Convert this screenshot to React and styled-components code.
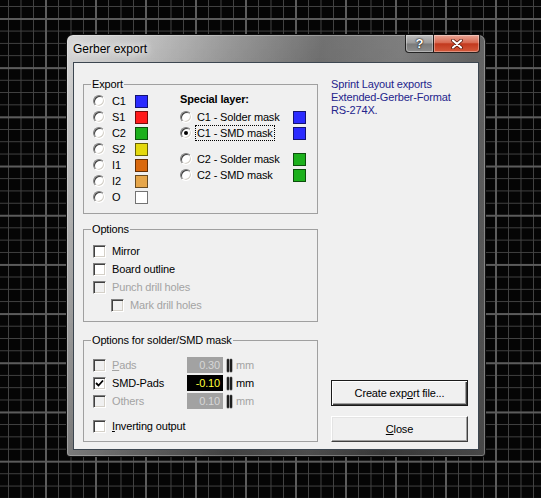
import React from 'react';
import styled, { createGlobalStyle, css } from 'styled-components';

const GlobalStyle = createGlobalStyle`
  html, body { margin: 0; padding: 0; }
  body {
    width: 541px;
    height: 498px;
    overflow: hidden;
    font-family: "Liberation Sans", Arial, sans-serif;
    background-color: #050505;
    background-image:
      linear-gradient(to right, #5c5c5c 2px, transparent 2px),
      linear-gradient(to bottom, #5c5c5c 2px, transparent 2px),
      linear-gradient(to right, #434343 1px, transparent 1px),
      linear-gradient(to bottom, #434343 1px, transparent 1px);
    background-size: 50px 100%, 100% 49.2px, 12.5px 100%, 100% 12.3px;
    background-position: 45px 0, 0 18px, 8px 0, 0 6px;
  }
`;

const Page = styled.div`
  box-sizing: border-box;
  width: 541px;
  height: 498px;
  padding: 34px 0 0 66px;
`;

const Window = styled.div`
  box-sizing: border-box;
  width: 420px;
  height: 423px;
  display: flex;
  flex-direction: column;
  padding: 0 6px 6px;
  border: 1px solid rgba(10, 10, 10, 0.95);
  border-radius: 7px 7px 4px 4px;
  box-shadow: inset 0 0 0 1px rgba(255, 255, 255, 0.28);
  background:
    linear-gradient(to bottom, rgba(255, 255, 255, 0.12), rgba(0, 0, 0, 0.3)),
    linear-gradient(103deg, #d2d2d2 0%, #bdbdbd 14%, #8a8a8a 32%, #5e5e5e 50%, #6e6e6e 66%, #4f4f4f 80%, #666 100%);
`;

const TitleBar = styled.div`
  height: 27px;
  display: flex;
  justify-content: space-between;
  align-items: flex-start;
`;

const Title = styled.span`
  align-self: center;
  font-size: 12px;
  line-height: 14px;
  color: #000;
  text-shadow: 0 0 6px #fff, 0 0 10px rgba(255, 255, 255, 0.9);
`;

const CaptionButtons = styled.div`
  display: flex;
  margin-right: -1px;
`;

const CaptionButton = styled.div`
  box-sizing: border-box;
  height: 18px;
  display: flex;
  align-items: center;
  justify-content: center;
  border: 1px solid rgba(20, 20, 20, 0.9);
  border-top: none;
  box-shadow: inset 0 0 0 1px rgba(255, 255, 255, 0.35);
`;

const HelpButton = styled(CaptionButton)`
  width: 28px;
  border-right: none;
  border-radius: 0 0 0 4px;
  background: linear-gradient(to bottom, #bdbdbd 0%, #9a9a9a 48%, #7a7a7a 52%, #8e8e8e 100%);
  color: #fff;
  font-weight: bold;
  font-size: 13px;
  text-shadow: 0 0 2px #000, 0 0 1px #000;
`;

const CloseButton = styled(CaptionButton)`
  width: 47px;
  border-radius: 0 0 4px 0;
  background: linear-gradient(to bottom, #e9a696 0%, #d86a52 45%, #c2391e 52%, #d45a3c 100%);
`;

const Client = styled.div`
  flex: 1;
  display: flex;
  gap: 13px;
  padding: 15px 10px 7px 9px;
  background: #f0f0f0;
  border: 1px solid #3c4650;
  font-size: 11px;
  line-height: 13px;
  letter-spacing: -0.15px;
  color: #000;
`;

const LeftColumn = styled.div`
  width: 235px;
  display: flex;
  flex-direction: column;
`;

const Group = styled.fieldset`
  margin: ${p => p.$gap || 0}px 0 0;
  padding: ${p => p.$pad};
  border: 1px solid #a0a0a0;
  min-width: 0;
`;

const Legend = styled.legend`
  padding: 0 1px;
  margin-left: -2px;
  font-size: 11px;
  line-height: 13px;
`;

const ExportBody = styled.div`
  display: flex;
  gap: 32px;
`;

const Stack = styled.div`
  display: flex;
  flex-direction: column;
`;

const Row = styled.div`
  display: flex;
  align-items: center;
  height: ${p => p.$h || 16}px;
  margin-top: ${p => p.$top || 0}px;
  padding-left: ${p => p.$indent || 0}px;
`;

const RadioMark = styled.span`
  box-sizing: border-box;
  flex: none;
  width: 12px;
  height: 12px;
  border-radius: 50%;
  border: 1px solid;
  border-color: #808080 #fff #fff #808080;
  box-shadow: inset 1px 1px 0 #404040, inset -1px -1px 0 #d4d0c8;
  background: #fff;
  display: flex;
  align-items: center;
  justify-content: center;
  margin-right: ${p => p.$gap}px;

  ${p => p.$on && css`
    &::after {
      content: '';
      width: 4px;
      height: 4px;
      border-radius: 50%;
      background: #000;
    }
  `}
`;

const LayerName = styled.span`
  width: ${p => p.$w}px;
  flex: none;
  white-space: nowrap;
`;

const FocusName = styled.span`
  box-sizing: border-box;
  height: 14px;
  padding: 0 1px;
  display: inline-flex;
  align-items: center;
  white-space: nowrap;
  outline: ${p => (p.$focus ? '1px dotted #000' : 'none')};
`;

const Swatch = styled.span`
  box-sizing: border-box;
  flex: none;
  width: 13px;
  height: 13px;
  border: 1px solid rgba(0, 0, 0, 0.55);
  background: ${p => p.$color};
`;

const Heading = styled.div`
  font-weight: bold;
  height: 12px;
  line-height: 12px;
  margin-bottom: 4px;
`;

const CheckBox = styled.span`
  box-sizing: border-box;
  flex: none;
  width: 13px;
  height: 13px;
  margin-right: 6px;
  border: 1px solid;
  border-color: #808080 #fff #fff #808080;
  box-shadow: inset 1px 1px 0 #404040, inset -1px -1px 0 #d4d0c8;
  background: ${p => (p.$disabled ? '#f0f0f0' : '#fff')};
  display: flex;
  align-items: center;
  justify-content: center;
`;

const Label = styled.span`
  white-space: nowrap;
  color: ${p => (p.$disabled ? '#a3a3a3' : '#000')};
  ${p => p.$w && css`width: ${p.$w}px; flex: none;`}
`;

const ValueBox = styled.span`
  box-sizing: border-box;
  width: 36px;
  height: 16px;
  padding-right: 3px;
  display: flex;
  align-items: center;
  justify-content: flex-end;
  background: ${p => (p.$active ? '#000' : '#a2a2a2')};
  color: ${p => (p.$active ? '#ffff3c' : '#d6d6d6')};
`;

const Spinner = styled.span`
  display: flex;
  gap: 1px;
  margin: 0 4px;
  height: 13px;

  &::before, &::after {
    content: '';
    width: 2px;
    height: 13px;
    border-radius: 1px;
    background: #1e1e1e;
    box-shadow: 0 0 0 0.5px #777;
  }
`;

const RightColumn = styled.div`
  width: 137px;
  display: flex;
  flex-direction: column;
  justify-content: space-between;
`;

const Info = styled.p`
  margin: 0;
  color: #24248c;
  line-height: 13px;
`;

const ButtonStack = styled.div`
  display: flex;
  flex-direction: column;
  gap: 10px;
`;

const PushButton = styled.button`
  box-sizing: border-box;
  width: 137px;
  height: 26px;
  padding: 0;
  font: 11px "Liberation Sans", Arial, sans-serif;
  letter-spacing: -0.15px;
  color: #000;
  background: #f0f0f0;
  border: 1px solid;
  border-color: #fff #404040 #404040 #fff;
  box-shadow: inset -1px -1px 0 #a0a0a0, inset 1px 1px 0 #e4e4e4;

  ${p => p.$default && css`
    border-color: #1a1a1a;
    box-shadow: inset 1px 1px 0 #fff, inset -1px -1px 0 #404040, inset -2px -2px 0 #a0a0a0;
  `}
`;

const exportLayers = [
  { name: 'C1', color: '#2b2bff' },
  { name: 'S1', color: '#ff1a1a' },
  { name: 'C2', color: '#1cb01c' },
  { name: 'S2', color: '#e4d90e' },
  { name: 'I1', color: '#d9690e' },
  { name: 'I2', color: '#e6a64a' },
  { name: 'O', color: '#ffffff' },
];

const CloseGlyph = () => (
  <svg width="12" height="10" viewBox="0 0 12 10">
    <path d="M2 1.5 L10 8.5 M10 1.5 L2 8.5" stroke="#4a0e00" strokeWidth="3.6" strokeLinecap="round" />
    <path d="M2 1.5 L10 8.5 M10 1.5 L2 8.5" stroke="#fff" strokeWidth="2.2" strokeLinecap="round" />
  </svg>
);

const CheckGlyph = () => (
  <svg width="9" height="9" viewBox="0 0 9 9">
    <path d="M1 4 L3.5 6.5 L8 1.5" fill="none" stroke="#000" strokeWidth="1.8" />
  </svg>
);

const Special = ({ label, color, on, focus, top }) => (
  <Row $top={top}>
    <RadioMark $gap={4} $on={on} />
    <LayerName $w={97}>
      <FocusName $focus={focus}>{label}</FocusName>
    </LayerName>
    <Swatch $color={color} />
  </Row>
);

const Option = ({ children, disabled, checked, indent }) => (
  <Row $h={18} $indent={indent}>
    <CheckBox $disabled={disabled}>{checked && <CheckGlyph />}</CheckBox>
    <Label $disabled={disabled}>{children}</Label>
  </Row>
);

const MaskOption = ({ label, value, disabled, checked }) => (
  <Row $h={18}>
    <CheckBox $disabled={disabled}>{checked && <CheckGlyph />}</CheckBox>
    <Label $w={75} $disabled={disabled}>{label}</Label>
    <ValueBox $active={!disabled}>{value}</ValueBox>
    <Spinner />
    <Label $disabled={disabled}>mm</Label>
  </Row>
);

export default function App() {
  return (
    <Page>
      <GlobalStyle />
      <Window>
        <TitleBar>
          <Title>Gerber export</Title>
          <CaptionButtons>
            <HelpButton>?</HelpButton>
            <CloseButton>
              <CloseGlyph />
            </CloseButton>
          </CaptionButtons>
        </TitleBar>
        <Client>
          <LeftColumn>
            <Group $pad="2px 0 8px 9px">
              <Legend>Export</Legend>
              <ExportBody>
                <Stack>
                  {exportLayers.map(l => (
                    <Row key={l.name}>
                      <RadioMark $gap={7} />
                      <LayerName $w={23}>{l.name}</LayerName>
                      <Swatch $color={l.color} />
                    </Row>
                  ))}
                </Stack>
                <Stack>
                  <Heading>Special layer:</Heading>
                  <Special label="C1 - Solder mask" color="#2b2bff" />
                  <Special label="C1 - SMD mask" color="#2b2bff" on focus />
                  <Special label="C2 - Solder mask" color="#1cb01c" top={10} />
                  <Special label="C2 - SMD mask" color="#1cb01c" />
                </Stack>
              </ExportBody>
            </Group>

            <Group $gap={9} $pad="6px 0 7px 9px">
              <Legend>Options</Legend>
              <Option>Mirror</Option>
              <Option>Board outline</Option>
              <Option disabled>Punch drill holes</Option>
              <Option disabled indent={18}>Mark drill holes</Option>
            </Group>

            <Group $gap={12} $pad="9px 0 6px 9px">
              <Legend>Options for solder/SMD mask</Legend>
              <MaskOption label={<><u>P</u>ads</>} value="0.30" disabled />
              <MaskOption label="SMD-Pads" value="-0.10" checked />
              <MaskOption label="Others" value="0.10" disabled />
              <Row $h={18} $top={7}>
                <CheckBox />
                <Label><u>I</u>nverting output</Label>
              </Row>
            </Group>
          </LeftColumn>

          <RightColumn>
            <Info>
              Sprint Layout exports
              <br />
              Extended-Gerber-Format
              <br />
              RS-274X.
            </Info>
            <ButtonStack>
              <PushButton $default>Create exp<u>o</u>rt file...</PushButton>
              <PushButton><u>C</u>lose</PushButton>
            </ButtonStack>
          </RightColumn>
        </Client>
      </Window>
    </Page>
  );
}
